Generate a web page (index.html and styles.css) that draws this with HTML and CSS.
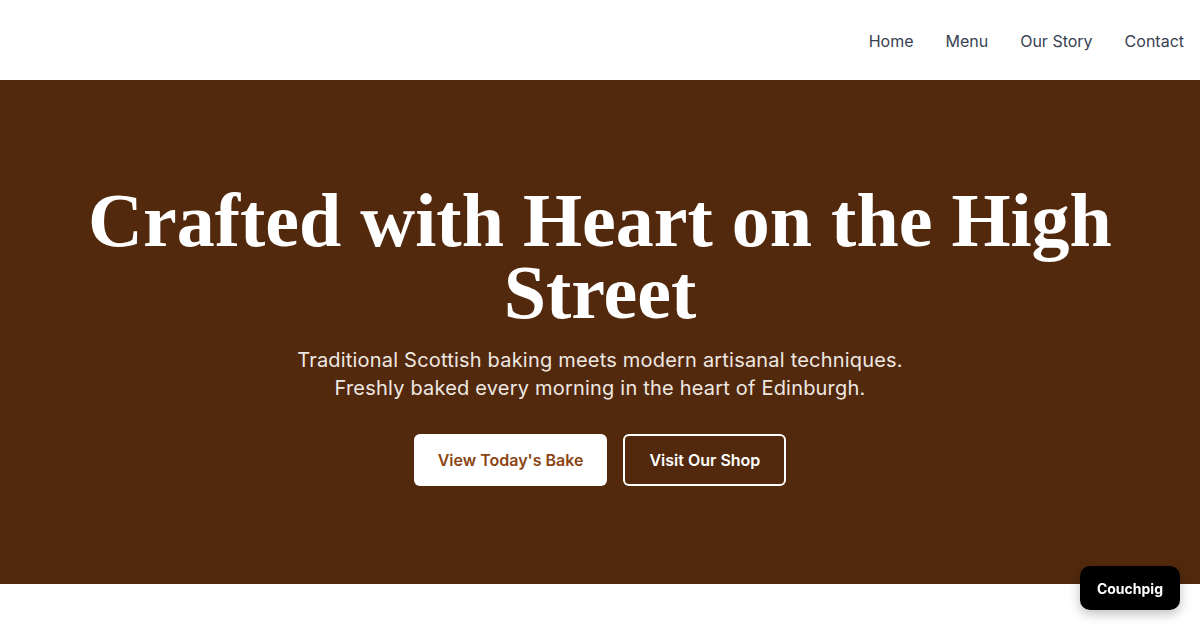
FILE: index.html
```html
<!DOCTYPE html>
<html lang="en">
<head>
<meta charset="utf-8">
<title>Crafted with Heart on the High Street</title>
<link rel="stylesheet" href="styles.css">
</head>
<body>
<header class="site-header">
  <nav class="nav">
    <a href="#" class="nav-link">Home</a>
    <a href="#" class="nav-link">Menu</a>
    <a href="#" class="nav-link">Our Story</a>
    <a href="#" class="nav-link">Contact</a>
  </nav>
</header>
<section class="hero">
  <h1 class="hero-title">Crafted with Heart on the High Street</h1>
  <p class="hero-text">Traditional Scottish baking meets modern artisanal techniques. Freshly baked every morning in the heart of Edinburgh.</p>
  <div class="hero-actions">
    <a href="#" class="btn btn-solid">View Today's Bake</a>
    <a href="#" class="btn btn-outline">Visit Our Shop</a>
  </div>
</section>
<a href="#" class="badge">Couchpig</a>
</body>
</html>
```
FILE: styles.css
```css
* { box-sizing: border-box; }
html, body { margin: 0; padding: 0; }
body {
  font-family: Inter, "Noto Sans", sans-serif;
  background: #ffffff;
  width: 1200px;
  height: 630px;
  overflow: hidden;
}
.site-header {
  height: 80px;
  display: flex;
  align-items: center;
  justify-content: flex-end;
  padding: 0 16px;
  background: #ffffff;
}
.nav {
  display: flex;
  gap: 32px;
}
.nav-link {
  color: #374151;
  text-decoration: none;
  font-size: 16px;
  line-height: 24px;
  padding-top: 2px;
}
.hero {
  height: 504px;
  background: #52290d;
  display: flex;
  flex-direction: column;
  align-items: center;
  justify-content: center;
  text-align: center;
  padding: 0 16px;
}
.hero-title {
  margin: 0;
  font-family: "Liberation Serif", "DejaVu Serif", serif;
  font-weight: 700;
  font-size: 76px;
  line-height: 72px;
  color: #ffffff;
  padding-top: 6px;
}
.hero-text {
  margin: 18px 0 0;
  max-width: 660px;
  font-size: 20px;
  line-height: 28px;
  letter-spacing: 0.2px;
  color: #eee8e2;
}
.hero-actions {
  margin-top: 32px;
  display: flex;
  gap: 16px;
}
.btn {
  display: inline-flex;
  align-items: center;
  height: 52px;
  padding: 0 24px;
  border-radius: 6px;
  font-size: 16px;
  font-weight: 600;
  text-decoration: none;
}
.btn-solid {
  background: #ffffff;
  color: #8b4513;
}
.btn-outline {
  border: 2px solid #ffffff;
  color: #ffffff;
}
.badge {
  position: fixed;
  right: 20px;
  bottom: 20px;
  height: 44px;
  padding: 0 17px;
  display: flex;
  align-items: center;
  background: #000000;
  color: #ffffff;
  border-radius: 10px;
  font-size: 14px;
  font-weight: 700;
  text-decoration: none;
  box-shadow: 0 4px 12px rgba(0, 0, 0, 0.25);
}
```
